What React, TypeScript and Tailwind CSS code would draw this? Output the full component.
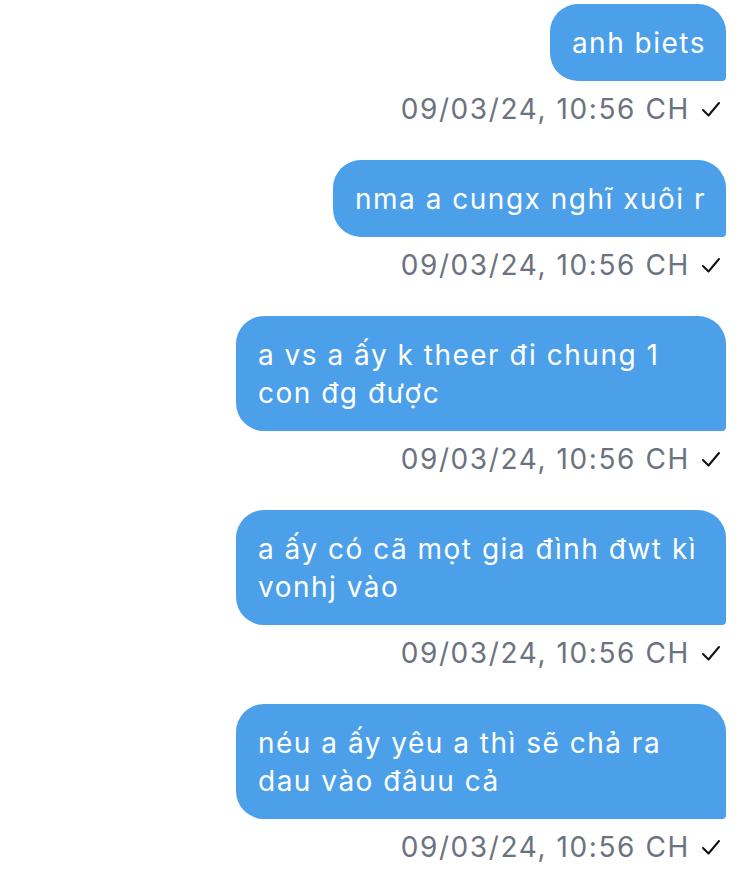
import React from 'react';

const messages = [
  'anh biets',
  'nma a cungx nghĩ xuôi r',
  'a vs a ấy k theer đi chung 1 con đg được',
  'a ấy có cã mọt gia đình đwt kì vonhj vào',
  'néu a ấy yêu a thì sẽ chả ra dau vào đâuu cả',
];

export default function App() {
  return (
    <div className="min-h-screen bg-white pt-1 pr-6 flex flex-col items-end" style={{ fontFamily: 'Inter, "Noto Sans", sans-serif' }}>
      {messages.map((m, i) => (
        <div key={i} className="flex flex-col items-end mb-[33px]">
          <div className="max-w-[490px] bg-[#4c9fe9] text-white text-[28px] leading-[38px] tracking-[1.5px] pl-[22px] pr-[20px] py-[19.5px] rounded-[28px] rounded-br-[4px]">
            {m}
          </div>
          <div className="mt-[10px] flex items-center gap-[10px] text-[28px] leading-[36px] tracking-[1.6px] text-[#6b7280] pr-[4px]">
            <span>09/03/24, 10:56 CH</span>
            <svg width="22" height="22" viewBox="0 0 22 22" fill="none" stroke="#111" strokeWidth="2" strokeLinecap="round" strokeLinejoin="round">
              <path d="M3 12 L8.5 17.5 L19 5" />
            </svg>
          </div>
        </div>
      ))}
    </div>
  );
}
